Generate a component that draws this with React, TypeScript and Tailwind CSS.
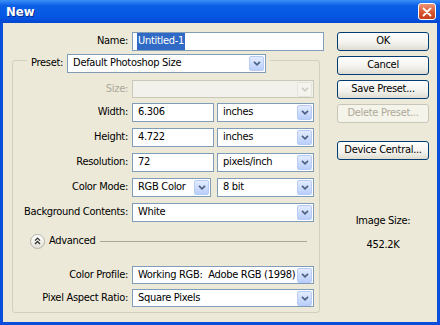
import React from 'react'

const font = "font-['DejaVu_Sans_Condensed',Tahoma,'Liberation_Sans',sans-serif]"

const Arrow = ({ disabled }: { disabled?: boolean }) => (
  <div
    className={`ml-auto mr-px flex h-[15px] w-[15px] shrink-0 items-center justify-center rounded-[2px] border ${
      disabled ? 'border-[#e6e4da] bg-[#f4f3ee]' : 'border-[#b6cbf5] bg-[linear-gradient(to_bottom,#e3ecfe,#b9cefa)]'
    }`}
  >
    <svg width="8" height="5" viewBox="0 0 8 5">
      <path d="M1 0.8l3 3 3-3" fill="none" stroke={disabled ? '#cfcdc2' : '#4d6185'} strokeWidth="1.7" />
    </svg>
  </div>
)

const Select = ({ value, w, disabled }: { value?: string; w: string; disabled?: boolean }) => (
  <div
    className={`flex h-full items-center overflow-hidden border pl-[5px] ${w} ${
      disabled ? 'border-[#c9c7ba] bg-[#f2f1ec]' : 'border-[#7f9db9] bg-white'
    }`}
  >
    <span className="whitespace-pre">{value}</span>
    <Arrow disabled={disabled} />
  </div>
)

const Input = ({ value, w }: { value: string; w: string }) => (
  <div className={`flex h-full items-center border border-[#7f9db9] bg-white pl-[5px] ${w}`}>{value}</div>
)

const Row = ({ label, children, disabled, h = 'h-[19px]', mt }: any) => (
  <div className={`flex items-center ${h} ${mt}`}>
    <div className={`w-[119px] shrink-0 pr-[4px] text-right ${disabled ? 'text-[#aca899]' : ''}`}>{label}</div>
    {children}
  </div>
)

const Btn = ({ children, disabled, mt }: any) => (
  <div
    className={`flex h-[19px] w-[92px] items-center justify-center rounded-[3px] border ${mt} ${
      disabled
        ? 'border-[#c9c7ba] bg-[#f5f4ea] text-[#aca899]'
        : 'border-[#003c74] bg-[linear-gradient(to_bottom,#ffffff,#f2f1ec_60%,#dedcd0)]'
    }`}
  >
    {children}
  </div>
)

export default function App() {
  return (
    <div className={`flex h-[325px] w-[440px] flex-col bg-[#0a4fdc] text-[11px] tracking-[-0.3px] text-black ${font}`}>
      {/* title bar */}
      <div className="flex h-[23px] shrink-0 items-center bg-[linear-gradient(to_bottom,#3d8ff7,#0a5fe6_25%,#0556e4_75%,#0446d0)] pl-[6px] pr-[4px]">
        <span className="text-[13px] font-bold tracking-normal text-white [text-shadow:1px_1px_0_#0a2a8a]">New</span>
        <div className="ml-auto flex h-[17px] w-[18px] items-center justify-center rounded-[3px] border border-white bg-[linear-gradient(to_bottom,#ec9478,#d9562f_55%,#c43e1c)]">
          <svg width="10" height="10" viewBox="0 0 10 10">
            <path d="M1.5 1.5l7 7M8.5 1.5l-7 7" stroke="white" strokeWidth="1.8" strokeLinecap="round" />
          </svg>
        </div>
      </div>

      {/* body */}
      <div className="mx-[3px] mb-[3px] flex flex-1 bg-[#ece9d8] pt-[9px]">
        <div className="w-[327px]">
          <div className="flex h-[19px] items-center">
            <div className="w-[129px] pr-[4px] text-right">Name:</div>
            <div className="flex h-full w-[192px] items-center border border-[#7f9db9] bg-white pl-[4px]">
              <span className="bg-[#316ac5] px-px text-white">Untitled-1</span>
            </div>
          </div>

          {/* group box */}
          <div className="ml-[9px] mt-[9px] flex h-[253px] w-[308px] flex-col rounded-[3px] border border-[#d0d0bf]">
            <div className="-mt-[7px] ml-[14px] flex h-[19px] w-fit items-center bg-[#ece9d8] px-[4px]">
              <span className="mr-[4px]">Preset:</span>
              <Select value="Default Photoshop Size" w="w-[199px]" />
            </div>

            <Row label="Size:" disabled h="h-[18px]" mt="mt-[7px]">
              <Select w="w-[182px]" disabled />
            </Row>
            <Row label="Width:" mt="mt-[5px]">
              <Input value="6.306" w="w-[82px]" />
              <div className="ml-[3px] h-full">
                <Select value="inches" w="w-[97px]" />
              </div>
            </Row>
            <Row label="Height:" mt="mt-[6px]">
              <Input value="4.722" w="w-[82px]" />
              <div className="ml-[3px] h-full">
                <Select value="inches" w="w-[97px]" />
              </div>
            </Row>
            <Row label="Resolution:" mt="mt-[6px]">
              <Input value="72" w="w-[82px]" />
              <div className="ml-[3px] h-full">
                <Select value="pixels/inch" w="w-[97px]" />
              </div>
            </Row>
            <Row label="Color Mode:" mt="mt-[6px]">
              <Select value="RGB Color" w="w-[79px]" />
              <div className="ml-[6px] h-full">
                <Select value="8 bit" w="w-[97px]" />
              </div>
            </Row>
            <Row label="Background Contents:" mt="mt-[6px]">
              <Select value="White" w="w-[182px]" />
            </Row>

            {/* advanced */}
            <div className="ml-[17px] mt-[11px] flex h-[16px] items-center">
              <div className="flex h-[15px] w-[15px] items-center justify-center rounded-full border border-[#b5b3a8] bg-[linear-gradient(to_bottom,#ffffff,#e4e2d8)]">
                <svg width="7" height="8" viewBox="0 0 7 8">
                  <path d="M1 3.6l2.5-2.5 2.5 2.5M1 7l2.5-2.5L6 7" fill="none" stroke="#333" strokeWidth="1.3" />
                </svg>
              </div>
              <span className="ml-[4px]">Advanced</span>
              <div className="ml-[5px] mr-[12px] h-0 flex-1 border-t border-[#a9a79a] border-b-white" />
            </div>

            <Row label="Color Profile:" h="h-[18px]" mt="mt-[17px]">
              <Select value="Working RGB:  Adobe RGB (1998)" w="w-[182px]" />
            </Row>
            <Row label="Pixel Aspect Ratio:" h="h-[18px]" mt="mt-[5px]">
              <Select value="Square Pixels" w="w-[182px]" />
            </Row>
          </div>
        </div>

        {/* buttons */}
        <div className="ml-[7px] flex flex-col">
          <Btn>OK</Btn>
          <Btn mt="mt-[5px]">Cancel</Btn>
          <Btn mt="mt-[5px]">Save Preset...</Btn>
          <Btn mt="mt-[5px]" disabled>
            Delete Preset...
          </Btn>
          <Btn mt="mt-[18px]">Device Central...</Btn>
          <div className="mt-[53px] text-center">Image Size:</div>
          <div className="mt-[7px] text-center">452.2K</div>
        </div>
      </div>
    </div>
  )
}
